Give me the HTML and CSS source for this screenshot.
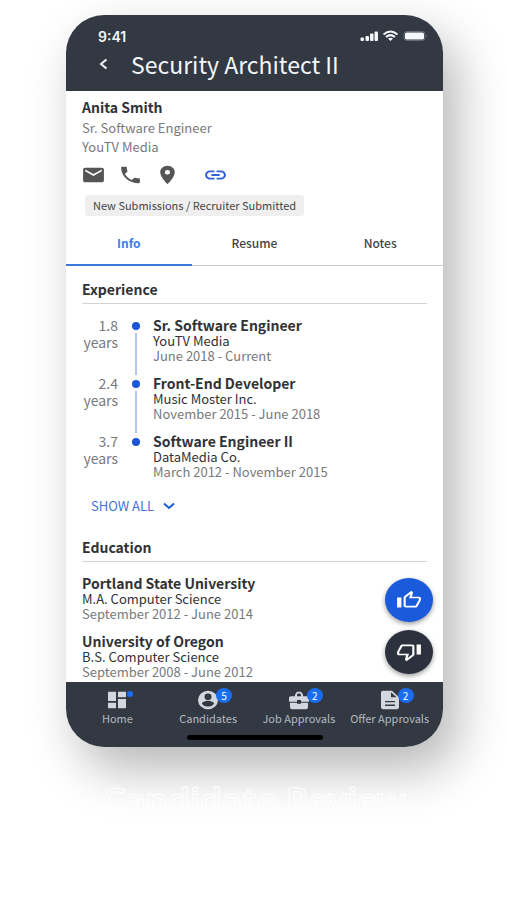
FILE: index.html
```html
<!DOCTYPE html>
<html lang="en">
<head>
    <meta charset="UTF-8">
    <meta name="viewport" content="width=device-width, initial-scale=1.0">
    <title>Candidate Review</title>
    <link rel="stylesheet" href="styles.css">
</head>
<body>

<main class="phone">
    <header class="header">
        <div class="status">
            <span class="time">9:41</span>
            <svg class="status-icons" width="70" height="14" viewBox="0 0 70 14" fill="#f4f6fa">
                <rect x="1.500" y="8.500" width="3.500" height="3.500" rx="1"/>
                <rect x="6.500" y="7" width="3.500" height="5" rx="1"/>
                <rect x="11" y="4.500" width="3.500" height="7.500" rx="1"/>
                <rect x="15.500" y="2.500" width="3.500" height="9.500" rx="1"/>
                <g fill="none" stroke="#f4f6fa" stroke-width="2">
                    <path d="M24.500 5.500Q31.500 -0.500 38.500 5.500"/>
                    <path d="M27 8Q31.500 4.300 36 8"/>
                </g>
                <path d="M29 9.500Q31.500 7.800 34 9.500L31.500 12z"/>
                <rect x="45" y="2.500" width="21" height="9" rx="2.500" fill="none" stroke="#646b74"/>
                <rect x="46" y="3.500" width="19" height="7" rx="1.500"/>
                <path d="M67.500 5.500Q69.500 7 67.500 8.500z" fill="#646b74"/>
            </svg>
        </div>
        <div class="title-bar">
            <button class="back" aria-label="Back">
                <svg width="11" height="12" viewBox="0 0 11 12" fill="none" stroke="#f4f6fa" stroke-width="2"><path d="M8.500 1.500L3 6L8.500 10.500"/></svg>
            </button>
            <h1>Security Architect II</h1>
        </div>
    </header>

    <section class="profile">
        <h2>Anita Smith</h2>
        <p>Sr. Software Engineer</p>
        <p>YouTV Media</p>
        <div class="contact">
            <a href="#" aria-label="Email"><svg width="25" height="22" viewBox="0 0 24 24" preserveAspectRatio="none"><path d="M20 4H4c-1.100 0-2 .9-2 2v12c0 1.100.9 2 2 2h16c1.100 0 2-.9 2-2V6c0-1.100-.9-2-2-2zm0 4l-8 5-8-5V6l8 5 8-5v2z"/></svg></a>
            <a href="#" aria-label="Call"><svg width="25" height="22" viewBox="0 0 24 24" preserveAspectRatio="none"><path d="M6.620 10.790c1.440 2.830 3.760 5.140 6.590 6.590l2.200-2.200c.27-.27.67-.36 1.020-.24 1.120.37 2.330.57 3.570.57.55 0 1 .45 1 1V20c0 .55-.45 1-1 1C10.610 21 3 13.390 3 4c0-.55.45-1 1-1h3.500c.55 0 1 .45 1 1 0 1.250.2 2.450.57 3.570.11.35.03.74-.25 1.020l-2.200 2.200z"/></svg></a>
            <a href="#" aria-label="Location"><svg width="25" height="22" viewBox="0 0 24 24" preserveAspectRatio="none"><path d="M12 2C8.130 2 5 5.130 5 9c0 5.250 7 13 7 13s7-7.750 7-13c0-3.870-3.130-7-7-7zm0 9.500a2.500 2.500 0 1 1 0-5 2.500 2.500 0 0 1 0 5z"/></svg></a>
            <a href="#" class="link" aria-label="Link"><svg width="25" height="22" viewBox="0 0 24 24" preserveAspectRatio="none"><path d="M3.900 12c0-1.710 1.390-3.100 3.100-3.100h4V7H7c-2.760 0-5 2.240-5 5s2.240 5 5 5h4v-1.900H7c-1.710 0-3.100-1.390-3.100-3.100zM8 13h8v-2H8v2zm9-6h-4v1.900h4c1.710 0 3.100 1.390 3.100 3.100s-1.390 3.100-3.100 3.100h-4V17h4c2.760 0 5-2.240 5-5s-2.240-5-5-5z"/></svg></a>
        </div>
        <span class="chip">New Submissions / Recruiter Submitted</span>
    </section>

    <div class="tabs" role="tablist">
        <button class="tab active" role="tab" aria-selected="true">Info</button>
        <button class="tab" role="tab" aria-selected="false">Resume</button>
        <button class="tab" role="tab" aria-selected="false">Notes</button>
    </div>

    <section class="section">
        <h3>Experience</h3>
        <ul class="timeline">
            <li>
                <div class="years">1.8<br>years</div>
                <div class="rail"><i class="dot"></i><i class="line"></i></div>
                <div class="entry">
                    <h4>Sr. Software Engineer</h4>
                    <p>YouTV Media</p>
                    <p class="date">June 2018 - Current</p>
                </div>
            </li>
            <li>
                <div class="years">2.4<br>years</div>
                <div class="rail"><i class="dot"></i><i class="line"></i></div>
                <div class="entry">
                    <h4>Front-End Developer</h4>
                    <p>Music Moster Inc.</p>
                    <p class="date">November 2015 - June 2018</p>
                </div>
            </li>
            <li>
                <div class="years">3.7<br>years</div>
                <div class="rail"><i class="dot"></i></div>
                <div class="entry">
                    <h4>Software Engineer II</h4>
                    <p>DataMedia Co.</p>
                    <p class="date">March 2012 - November 2015</p>
                </div>
            </li>
        </ul>
        <button class="show-all">SHOW ALL
            <svg width="12" height="8" viewBox="0 0 12 8" fill="none" stroke="#1a5bdb" stroke-width="2"><path d="M1 1.500L6 6L11 1.500"/></svg>
        </button>
    </section>

    <section class="section education">
        <h3>Education</h3>
        <div class="entry">
            <h4>Portland State University</h4>
            <p>M.A. Computer Science</p>
            <p class="date">September 2012 - June 2014</p>
        </div>
        <div class="entry">
            <h4>University of Oregon</h4>
            <p>B.S. Computer Science</p>
            <p class="date">September 2008 - June 2012</p>
        </div>
    </section>

    <footer class="footer">
        <div class="votes">
            <button class="vote up" aria-label="Approve">
                <svg width="26" height="20" viewBox="0 0 24 24" preserveAspectRatio="none" fill="#fff"><path d="M9 21h9c.83 0 1.540-.5 1.840-1.220l3.020-7.050c.09-.23.14-.47.14-.73v-2c0-1.100-.9-2-2-2h-6.310l.95-4.570.03-.32c0-.41-.17-.79-.44-1.060L14.170 1 7.580 7.590C7.220 7.950 7 8.450 7 9v10c0 1.100.9 2 2 2zM9 9l4.340-4.340L12 10h9v2l-3 7H9V9zM1 9h4v12H1z"/></svg>
            </button>
            <button class="vote down" aria-label="Reject">
                <svg width="26" height="20" viewBox="0 0 24 24" preserveAspectRatio="none" fill="#fff"><path d="M15 3H6c-.83 0-1.540.5-1.840 1.220l-3.020 7.050c-.09.23-.14.47-.14.73v2c0 1.100.9 2 2 2h6.310l-.95 4.570-.03.32c0 .41.17.79.44 1.060L9.830 23l6.590-6.590c.36-.36.58-.86.58-1.410V5c0-1.100-.9-2-2-2zm0 12l-4.340 4.340L12 14H3v-2l3-7h9v10zm4-12h4v12h-4z"/></svg>
            </button>
        </div>
        <nav class="nav">
            <a href="#">
                <span class="icon">
                    <svg width="24" height="22" viewBox="0 0 24 24" preserveAspectRatio="none"><path d="M3 13h8V3H3v10zm0 8h8v-6H3v6zm10 0h8V11h-8v10zm0-18v6h8V3h-8z"/></svg>
                    <i class="badge small"></i>
                </span>
                Home
            </a>
            <a href="#">
                <span class="icon">
                    <svg width="24" height="22" viewBox="0 0 24 24" preserveAspectRatio="none"><path d="M12 2a10 10 0 1 0 0 20 10 10 0 0 0 0-20zm0 3a3.500 3.500 0 1 1 0 7 3.500 3.500 0 0 1 0-7zm0 14.200c-2.500 0-4.710-1.280-6-3.220.03-1.990 4-3.080 6-3.080s5.970 1.090 6 3.080c-1.290 1.940-3.500 3.220-6 3.220z"/></svg>
                    <b class="badge">5</b>
                </span>
                Candidates
            </a>
            <a href="#">
                <span class="icon">
                    <svg width="24" height="22" viewBox="0 0 24 24" preserveAspectRatio="none"><path d="M10 16v-1H3v5c0 1.100.9 2 2 2h14c1.100 0 2-.9 2-2v-5h-7v1zM20 8h-4V6l-2-3h-4L8 6v2H4c-1.100 0-2 .9-2 2v3c0 .6.400 1 1 1h7v-2h4v2h8v-4c0-1.100-.9-2-2-2zm-6 0h-4V6l1-1h2l1 1z"/></svg>
                    <b class="badge">2</b>
                </span>
                Job Approvals
            </a>
            <a href="#">
                <span class="icon">
                    <svg width="24" height="22" viewBox="0 0 24 24" preserveAspectRatio="none"><path d="M14 2H5c-1.100 0-2 .9-2 2v16c0 1.100.9 2 2 2h14c1.100 0 2-.9 2-2V9zM7 13h10v1.500H7zm0 4h10v1.500H7zM13 9V3.500l5.500 5.500z"/></svg>
                    <b class="badge">2</b>
                </span>
                Offer Approvals
            </a>
        </nav>
        <div class="home-bar"></div>
    </footer>
</main>

<p class="caption">Candidate Review</p>

</body>
</html>
```

FILE: styles.css
```css
* {
    box-sizing: border-box;
}
body {
    margin: 0;
    padding: 15px 64px 0 66px;
    background-color: #fff;
    color: #303236;
    font-family: "Noto Sans CJK SC", "Noto Sans", sans-serif;
    font-size: 13px;
}
h1, h2, h3, h4, p, ul {
    margin: 0;
    padding: 0;
}
button {
    padding: 0;
    border: none;
    background: none;
    font-family: inherit;
    cursor: pointer;
}
svg {
    display: block;
}
.phone {
    border-radius: 38px;
    background-color: #fff;
    box-shadow: 14px 22px 50px rgba(0,0,0,0.29);
}
.header {
    height: 76px;
    padding: 11px 14px 0 32px;
    border-radius: 38px 38px 0 0;
    background-color: #323943;
    color: #f4f6fa;
}
.status {
    display: flex;
    justify-content: space-between;
    align-items: center;
    height: 20px;
}
.time {
    font-family: Inter, sans-serif;
    font-size: 14px;
    font-weight: 600;
}
.title-bar {
    display: flex;
    align-items: center;
    gap: 22px;
    height: 36px;
}
h1 {
    font-size: 23px;
    font-weight: 400;
    line-height: 36px;
}
.profile {
    padding: 5px 16px 0;
    color: #77797c;
}
.profile h2 {
    color: #303236;
    font-size: 14px;
    line-height: 22px;
}
.profile p {
    line-height: 19px;
}
.contact {
    display: flex;
    gap: 12px;
    padding: 8px 0 9px;
    fill: #555;
}
.contact a:first-child {
    margin-left: -1px;
}
.contact .link {
    margin-left: 11px;
    fill: #2f62d9;
}
.chip {
    display: block;
    width: fit-content;
    margin-left: 3px;
    padding: 0 8px;
    border-radius: 3px;
    background-color: #efefef;
    color: #444;
    font-size: 11px;
    line-height: 21px;
}
.tabs {
    display: grid;
    grid-template-columns: repeat(3, 1fr);
    margin-top: 4px;
}
.tab {
    height: 46px;
    border-bottom: 1px solid #ccc;
    color: #444;
    font-size: 12px;
    font-weight: 500;
}
.tab.active {
    border-bottom: 2px solid #3c78dc;
    color: #3b80e8;
    font-weight: 700;
}
.section {
    padding: 13px 16px 0;
}
h3 {
    padding-bottom: 4px;
    border-bottom: 1px solid #d4d4d4;
    font-size: 14px;
    line-height: 20px;
}
.timeline {
    margin-top: 13px;
    list-style: none;
}
.timeline li {
    display: grid;
    grid-template-columns: 36px 35px 1fr;
    min-height: 58px;
}
.years {
    color: #77797c;
    font-size: 14px;
    line-height: 17px;
    text-align: right;
}
.rail {
    display: flex;
    flex-direction: column;
    align-items: center;
    gap: 3px;
    padding-top: 5px;
}
.dot {
    width: 8px;
    height: 8px;
    border-radius: 50%;
    background-color: #1a56d6;
}
.line {
    flex: 1;
    width: 2px;
    background-color: #b3c7f2;
}
h4 {
    font-size: 14px;
    line-height: 16px;
}
.entry p {
    line-height: 15px;
}
.entry .date {
    color: #77797c;
}
.show-all {
    display: flex;
    align-items: center;
    gap: 9px;
    margin: 5px 0 0 9px;
    color: #3d72dd;
    font-size: 13px;
    line-height: 20px;
}
.education {
    padding-top: 21px;
}
.education .entry {
    padding-bottom: 12px;
}
.education h3 {
    margin-bottom: 13px;
}
.education .entry:last-child {
    padding-bottom: 3px;
}
.footer {
    position: relative;
    padding-bottom: 7px;
    border-radius: 0 0 38px 38px;
    background-color: #323943;
}
/* floating vote buttons sit over the list */
.votes {
    position: absolute;
    right: 10px;
    bottom: 73px;
    display: grid;
    gap: 8px;
}
.vote {
    display: flex;
    justify-content: center;
    align-items: center;
    width: 48px;
    height: 44px;
    border-radius: 50%;
    box-shadow: 0 2px 5px rgba(0,0,0,0.4);
}
.up {
    background-color: #1a5bdb;
}
.down {
    background-color: #2c323d;
}
.nav {
    display: grid;
    grid-template-columns: repeat(4, 1fr);
    padding: 7px 8px 0 6px;
}
.nav a {
    display: flex;
    flex-direction: column;
    align-items: center;
    height: 46px;
    color: #b4b9c0;
    font-size: 11px;
    line-height: 15px;
    text-decoration: none;
    white-space: nowrap;
}
.icon {
    position: relative;
    fill: #d3d7de;
}
.badge {
    position: absolute;
    top: -1px;
    left: 20px;
    width: 16px;
    height: 15px;
    border-radius: 50%;
    background-color: #1a6df0;
    color: #fff;
    font-size: 10px;
    font-weight: 400;
    line-height: 15px;
    text-align: center;
}
.badge.small {
    top: 2px;
    left: 22px;
    width: 6px;
    height: 6px;
}
.home-bar {
    width: 136px;
    height: 5px;
    margin: 0 auto;
    border-radius: 3px;
    background-color: #000;
}
.caption {
    margin-top: 33px;
    color: transparent;
    font-family: "Noto Sans", sans-serif;
    font-size: 35px;
    font-weight: 600;
    line-height: 40px;
    text-align: center;
    white-space: nowrap;
    -webkit-text-stroke: 1px #fff;
}
```
